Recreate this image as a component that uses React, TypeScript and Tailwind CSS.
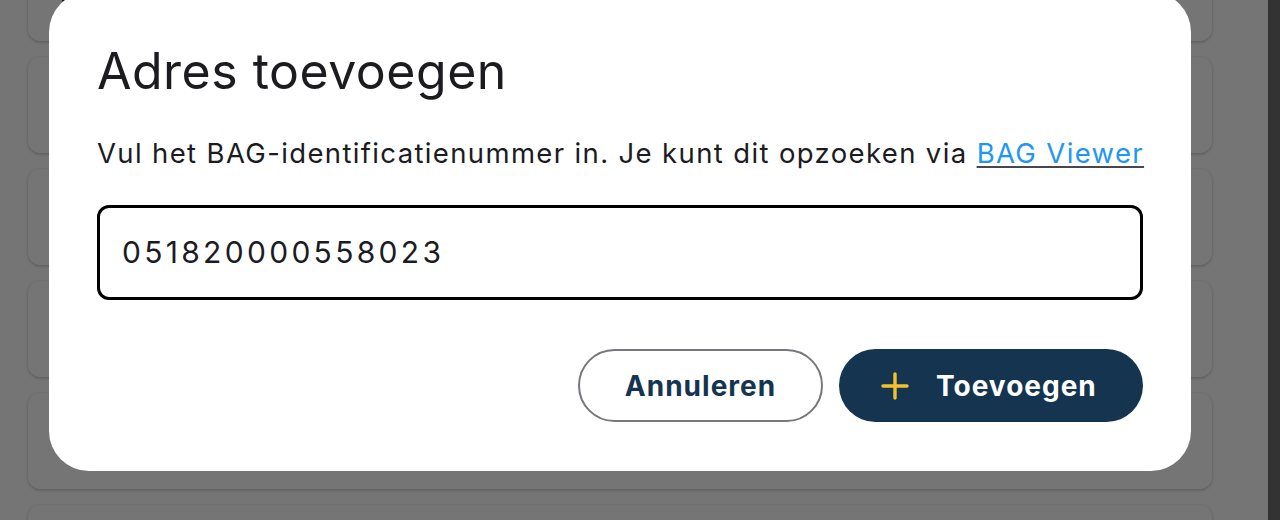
import React from "react";

function Plus() {
  return (
    <svg width="28" height="28" viewBox="0 0 28 28" fill="none">
      <path d="M14 2v24M2 14h24" stroke="#F3C12E" strokeWidth="3.4" strokeLinecap="round" />
    </svg>
  );
}

export default function App() {
  const cards = [0, 1, 2, 3, 4, 5];
  return (
    <div className="relative flex h-[520px] w-[1280px] overflow-hidden bg-[#757575]" style={{ fontFamily: "Inter, 'Noto Sans', sans-serif" }}>
      <div className="flex w-[1268px] flex-col pl-7 pr-14">
        <div className="-mt-[55px] flex flex-col gap-4">
          {cards.map((c) => (
            <div key={c} className="relative h-24 w-full rounded-xl bg-[#757575] shadow-[0_1px_3px_rgba(0,0,0,0.25)]">
              {c === 0 && <div className="absolute left-[34px] top-[51px] h-[7px] w-[10px] rounded-sm bg-[#111111]" />}
            </div>
          ))}
        </div>
      </div>
      <div className="w-3 bg-[#333333]" />

      <div className="absolute left-[49px] top-[-8px] flex h-[479px] w-[1142px] flex-col rounded-[40px] bg-white px-12 pt-12">
        <h1 className="text-[50px] leading-[62px] font-normal tracking-[0.5px] text-[#1c1b1f]">Adres toevoegen</h1>
        <p className="mt-[33px] whitespace-nowrap text-[27.5px] leading-[36px] tracking-[1.36px] text-[#1c1b1f]">
          Vul het BAG-identificatienummer in. Je kunt dit opzoeken via{" "}
          <a href="#" className="text-[#2196f3] underline decoration-[#49454f] decoration-2 underline-offset-[3px]">BAG Viewer</a>
        </p>
        <div className="mt-[34px] flex h-[95px] items-center rounded-xl border-[3px] border-black px-[22px]">
          <span className="text-[30px] tracking-[3.3px] text-[#1c1b1f]">051820000558023</span>
        </div>
        <div className="mt-[49px] flex justify-end gap-4">
          <button className="flex h-[73px] w-[245px] items-center justify-center rounded-full border-2 border-[#79767d] bg-white text-[28px] font-bold tracking-[1px] text-[#15344f]">
            Annuleren
          </button>
          <button className="flex h-[73px] w-[304px] items-center gap-[27px] rounded-full bg-[#15344f] pl-[42px] text-[28px] font-bold tracking-[1px] text-white">
            <Plus />
            <span>Toevoegen</span>
          </button>
        </div>
      </div>
    </div>
  );
}
